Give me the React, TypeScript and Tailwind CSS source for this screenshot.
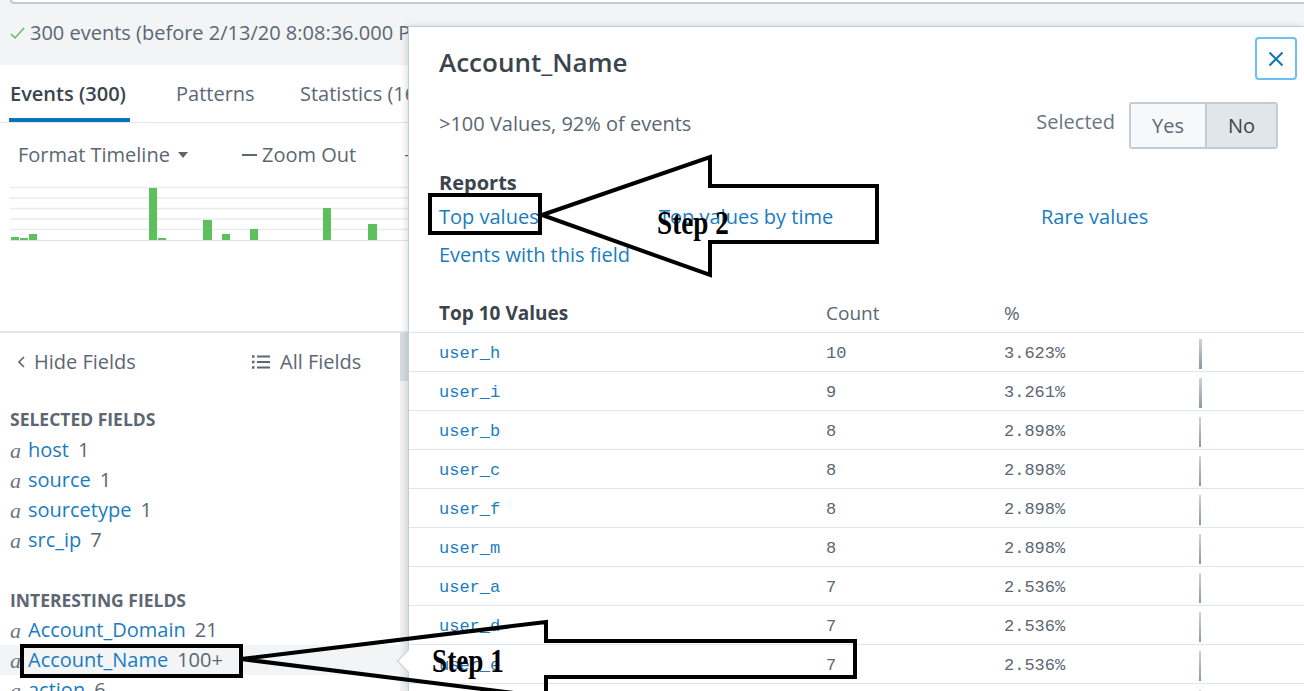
import React from 'react';

const selectedFields = [
  { name: 'host', count: '1' },
  { name: 'source', count: '1' },
  { name: 'sourcetype', count: '1' },
  { name: 'src_ip', count: '7' },
];

const interestingFields = [
  { name: 'Account_Domain', count: '21', active: false },
  { name: 'Account_Name', count: '100+', active: true },
  { name: 'action', count: '6', active: false },
];

const topValues = [
  { value: 'user_h', count: 10, pct: '3.623' },
  { value: 'user_i', count: 9, pct: '3.261' },
  { value: 'user_b', count: 8, pct: '2.898' },
  { value: 'user_c', count: 8, pct: '2.898' },
  { value: 'user_f', count: 8, pct: '2.898' },
  { value: 'user_m', count: 8, pct: '2.898' },
  { value: 'user_a', count: 7, pct: '2.536' },
  { value: 'user_d', count: 7, pct: '2.536' },
  { value: 'user_e', count: 7, pct: '2.536' },
  { value: 'user_g', count: 7, pct: '2.536' },
];

// timeline columns: x, width, height (px above the baseline)
const bars = [
  { x: 11, w: 8, h: 3 },
  { x: 20, w: 8, h: 2 },
  { x: 29, w: 8, h: 6 },
  { x: 149, w: 8, h: 52 },
  { x: 158, w: 8, h: 2 },
  { x: 203, w: 9, h: 20 },
  { x: 222, w: 8, h: 6 },
  { x: 250, w: 8, h: 11 },
  { x: 323, w: 8, h: 32 },
  { x: 368, w: 9, h: 16 },
  { x: 520, w: 8, h: 12 },
  { x: 610, w: 8, h: 24 },
];

const Timeline = () => (
  <svg width="1304" height="57" className="block">
    {[2.5, 13, 23.5, 34, 44.5].map(y => (
      <line key={y} x1="10" x2="1304" y1={y} y2={y} stroke="#e9ecef" strokeWidth="1.5" />
    ))}
    <line x1="10" x2="1304" y1="55.5" y2="55.5" stroke="#dfe3e7" strokeWidth="1" />
    {bars.map(b => (
      <rect key={b.x} x={b.x} y={55 - b.h} width={b.w} height={b.h} fill="#5cc05c" />
    ))}
  </svg>
);

const FieldRow = ({ name, count, active }: { name: string; count: string; active?: boolean }) => (
  <div className={`flex h-[30px] items-center pl-[10px] text-[20px] ${active ? 'bg-[#f2f4f5]' : ''}`}>
    <span className="w-[18px] font-['Liberation_Serif',serif] text-[22px] italic text-[#6b7580]">a</span>
    <span className="text-[#1a7cbf]">{name}</span>
    <span className="ml-[9px]">{count}</span>
  </div>
);

export default function App() {
  return (
    <div className="relative h-[691px] w-[1304px] overflow-hidden bg-white font-['Open_Sans',sans-serif] text-[#5c6773]">
      {/* search bar edge + job status */}
      <div className="flex h-[65px] flex-col bg-[#f2f4f5]">
        <div className="ml-[10px] h-[4px] rounded-bl-[4px] border-b-2 border-l-2 border-[#c3cbd4] bg-white" />
        <div className="flex h-[58px] items-center gap-[5px] pl-[10px] text-[20px]">
          <svg width="15" height="14" viewBox="0 0 15 14">
            <polyline points="1,8 5,12 14,2" fill="none" stroke="#5cc05c" strokeWidth="1.5" />
          </svg>
          <span>300 events (before 2/13/20 8:08:36.000 PM)</span>
        </div>
      </div>

      {/* tabs */}
      <div className="flex h-[58px] items-start border-b border-[#e1e6eb] pl-[9px] text-[20px]">
        <div className="flex h-[57px] w-[121px] items-center border-b-4 border-[#0a74ba] pl-[1px] pt-[5px] font-semibold text-[#3c444d]">
          Events (300)
        </div>
        <div className="ml-[46px] flex h-[57px] w-[124px] items-center">Patterns</div>
        <div className="flex h-[57px] items-center">Statistics (16)</div>
      </div>

      {/* timeline */}
      <div className="h-[210px] border-b-2 border-[#e1e6eb] pt-[20px]">
        <div className="flex h-[24px] items-center text-[20px]">
          <div className="ml-[18px] flex w-[224px] items-center gap-[8px]">
            Format Timeline
            <svg width="10" height="6" viewBox="0 0 10 6">
              <polygon points="0,0 10,0 5,6" fill="#5c6773" />
            </svg>
          </div>
          <div className="flex w-[162px] items-center gap-[5px]">
            <span className="h-[2px] w-[15px] bg-[#5c6773]" />
            Zoom Out
          </div>
          <div className="flex items-center gap-[5px]">+ Zoom to Selection</div>
        </div>
        <div className="mt-[18px]">
          <Timeline />
        </div>
      </div>

      {/* fields sidebar */}
      <div className="flex">
        <div className="w-[400px]">
          <div className="flex h-[58px] items-center text-[20px]">
            <div className="flex w-[252px] items-center gap-[9px] pl-[18px]">
              <svg width="7" height="12" viewBox="0 0 7 12">
                <polyline points="6,1 1,6 6,11" fill="none" stroke="#5c6773" strokeWidth="1.6" />
              </svg>
              Hide Fields
            </div>
            <div className="flex items-center gap-[10px]">
              <svg width="18" height="14" viewBox="0 0 18 14">
                {[1.5, 7, 12.5].map(y => (
                  <g key={y}>
                    <rect x="0" y={y - 1.25} width="2.5" height="2.5" fill="#5c6773" />
                    <rect x="5" y={y - 1} width="13" height="2" fill="#5c6773" />
                  </g>
                ))}
              </svg>
              All Fields
            </div>
          </div>
          <div className="mt-[13px] flex h-[30px] items-center pl-[10px] text-[17.5px] font-bold uppercase">Selected Fields</div>
          <div className="mt-[1px]">
            {selectedFields.map(f => (
              <FieldRow key={f.name} name={f.name} count={f.count} />
            ))}
          </div>
          <div className="mt-[30px] flex h-[30px] items-center pl-[10px] text-[17.5px] font-bold uppercase">Interesting Fields</div>
          {interestingFields.map(f => (
            <FieldRow key={f.name} name={f.name} count={f.count} active={f.active} />
          ))}
        </div>
        <div className="h-[358px] w-[8px] bg-[#eef0f2]">
          <div className="h-[48px] bg-[#d7dbe0]" />
        </div>
        <div className="flex-1" />
      </div>

      {/* field summary popup */}
      <div className="absolute bottom-0 left-[408px] right-0 top-[26px] border-l border-t border-[#c3cbd4] bg-white shadow-[-2px_0_6px_rgba(0,0,0,0.12)]">
        <div className="absolute -left-[9px] top-[626px] h-[16px] w-[16px] rotate-45 border-b border-l border-[#c3cbd4] bg-white" />
        <button className="absolute right-[7px] top-[10px] flex h-[43px] w-[42px] items-center justify-center rounded-[4px] border-2 border-[#6cc0f5] bg-white">
          <svg width="16" height="16" viewBox="0 0 16 16">
            <path d="M1.5 1.5 L14.5 14.5 M14.5 1.5 L1.5 14.5" stroke="#1473b8" strokeWidth="2" />
          </svg>
        </button>

        <div className="pl-[30px] pt-[21px]">
          <h1 className="h-[28px] text-[26px] font-semibold leading-[28px] text-[#3c444d]">Account_Name</h1>
        </div>

        <div className="mt-[26px] flex h-[47px] items-center pl-[30px] pr-[26px] text-[20px]">
          <span className="mb-[4px] flex-1">&gt;100 Values, 92% of events</span>
          <span className="mb-[8px] mr-[14px] text-[#6b7580]">Selected</span>
          <div className="flex h-[47px] overflow-hidden rounded-[3px] border-2 border-[#c3cbd4]">
            <div className="flex w-[74px] items-center justify-center bg-[#f7f8fa]">Yes</div>
            <div className="flex w-[71px] items-center justify-center border-l-2 border-[#c3cbd4] bg-[#e1e6eb] text-[#3c444d]">No</div>
          </div>
        </div>

        <div className="mt-[22px] h-[24px] pl-[30px] text-[20px] font-bold leading-[24px] text-[#3c444d]">Reports</div>
        <div className="mt-[3px] flex h-[38px] items-center pl-[30px] text-[20px] text-[#1a7cbf]">
          <span className="w-[220px]">Top values</span>
          <span className="w-[382px]">Top values by time</span>
          <span>Rare values</span>
        </div>
        <div className="flex h-[38px] items-center pl-[30px] text-[20px] text-[#1a7cbf]">Events with this field</div>

        <div className="mt-[20px]">
          <div className="flex h-[39px] items-center border-b border-[#e1e6eb] text-[19px]">
            <div className="w-[417px] pl-[30px] font-bold text-[#3c444d]">Top 10 Values</div>
            <div className="w-[178px]">Count</div>
            <div>%</div>
          </div>
          {topValues.map(r => (
            <div key={r.value} className="flex h-[39px] items-center border-b border-[#e1e6eb] pt-[4px] font-['Liberation_Mono',monospace] text-[17px]">
              <div className="w-[417px] pl-[30px] text-[#1a7cbf]">{r.value}</div>
              <div className="w-[178px]">{r.count}</div>
              <div className="w-[195px]">{r.pct}%</div>
              <div
                className="h-[30px] bg-gradient-to-b from-[#cdd3da] to-[#8d98a4]"
                style={{ width: `${Math.round(parseFloat(r.pct) * 0.8)}px` }}
              />
            </div>
          ))}
        </div>
      </div>

      {/* tutorial annotations */}
      <svg className="pointer-events-none absolute inset-0" width="1304" height="691">
        <rect x="430" y="195" width="110" height="38" fill="none" stroke="#000" strokeWidth="4" />
        <polygon points="542,215 710,157 710,186 877,186 877,242 710,242 710,275" fill="none" stroke="#000" strokeWidth="4" />
        <rect x="22" y="646" width="219" height="30" fill="none" stroke="#000" strokeWidth="4" />
        <polygon points="241,659 546,622 546,641 855,641 855,677 546,677 546,697" fill="none" stroke="#000" strokeWidth="4" />
      </svg>
      <span className="pointer-events-none absolute left-[657px] top-[206px] origin-left scale-x-[0.8] font-['Liberation_Serif',serif] text-[34px] font-bold leading-none text-black">
        Step 2
      </span>
      <span className="pointer-events-none absolute left-[432px] top-[644px] origin-left scale-x-[0.8] font-['Liberation_Serif',serif] text-[34px] font-bold leading-none text-black">
        Step 1
      </span>
    </div>
  );
}
